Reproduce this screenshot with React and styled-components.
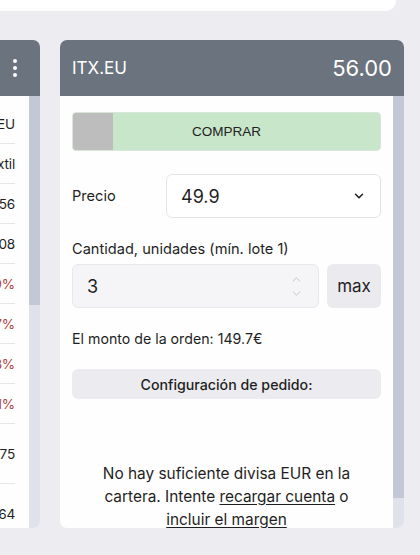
import React from 'react';
import styled, { createGlobalStyle } from 'styled-components';

const GlobalStyle = createGlobalStyle`
  html, body {
    margin: 0;
    padding: 0;
    background: #ececf1;
  }
  body {
    font-family: Inter, "Noto Sans", sans-serif;
    color: #1f1f23;
    overflow: hidden;
  }
`;

const Page = styled.div`
  width: 420px;
  height: 555px;
  display: flex;
  flex-direction: column;
  overflow: hidden;
`;

const TopCard = styled.div`
  height: 11px;
  margin-right: 24px;
  background: #fff;
  border-bottom-right-radius: 10px;
`;

const Columns = styled.div`
  display: flex;
  gap: 20px;
  margin-top: 29px;
  height: 488px;
`;

const Panel = styled.div`
  display: flex;
  flex-direction: column;
  background: #fefefe;
  border-radius: 7px;
  overflow: hidden;
  flex: none;
  width: ${(p) => p.$width}px;
  margin-left: ${(p) => p.$offset || 0}px;
`;

const Header = styled.div`
  height: 56px;
  flex: none;
  display: flex;
  align-items: center;
  justify-content: space-between;
  padding: 0 12px;
  background: #6b737e;
  color: #fff;
`;

const Ticker = styled.span`
  font-size: 17px;
`;

const Price = styled.span`
  font-size: 22px;
`;

const Body = styled.div`
  flex: 1;
  display: flex;
  min-height: 0;
`;

const Scrollbar = styled.div`
  width: 11px;
  flex: none;
  display: flex;
  flex-direction: column;
  background: #dfe2ea;
`;

const Thumb = styled.div`
  height: ${(p) => p.$size}px;
  background: #c3c8d7;
`;

const List = styled.div`
  flex: 1;
  display: flex;
  flex-direction: column;
  padding: 8px 14px 0 0;
  min-width: 0;
`;

const Row = styled.div`
  height: ${(p) => p.$h || 39}px;
  flex: none;
  display: flex;
  align-items: center;
  justify-content: flex-end;
  border-bottom: 1px solid #e6e6ea;
  font-size: 13.6px;
  letter-spacing: -0.2px;
  color: ${(p) => (p.$neg ? '#b3443e' : '#1f1f23')};
  white-space: nowrap;
`;

const Kebab = styled.div`
  margin-left: auto;
  margin-right: 11px;
  display: flex;
  flex-direction: column;
  gap: 3px;

  span {
    width: 4px;
    height: 4px;
    border-radius: 50%;
    background: #fff;
  }
`;

const Content = styled.div`
  flex: 1;
  display: flex;
  flex-direction: column;
  padding: 16px 12px 0;

  & > * {
    flex-shrink: 0;
  }
`;

const BuyButton = styled.button`
  display: flex;
  box-sizing: border-box;
  height: 39px;
  padding: 0;
  border: 1px solid #d9e7da;
  border-radius: 4px;
  overflow: hidden;
  background: #c8e6c9;
  font-family: "Liberation Sans", Arial, sans-serif;
  font-size: 13.5px;
  color: #222;

  .grip {
    width: 40px;
    background: #bdbdbd;
  }

  .label {
    flex: 1;
    display: flex;
    align-items: center;
    justify-content: center;
    padding-right: 40px;
  }
`;

const PriceRow = styled.div`
  display: flex;
  align-items: center;
  margin-top: 23px;
`;

const Label = styled.span`
  font-size: 14.6px;
  color: #1f1f23;
`;

const Select = styled.div`
  margin-left: auto;
  width: 215px;
  height: 44px;
  box-sizing: border-box;
  display: flex;
  align-items: center;
  justify-content: space-between;
  padding: 0 14px 0 14px;
  border: 1px solid #e3e3e8;
  border-radius: 6px;
  font-size: 18px;
  background: #fff;
`;

const QtyLabel = styled(Label)`
  display: block;
  margin-top: 22px;
`;

const QtyRow = styled.div`
  display: flex;
  gap: 8px;
  margin-top: 6px;
  height: 44px;
`;

const QtyInput = styled.div`
  flex: 1;
  display: flex;
  align-items: center;
  justify-content: space-between;
  padding: 0 17px 0 14px;
  border: 1px solid #e8e8ec;
  border-radius: 6px;
  background: #f5f5f7;
  font-size: 18px;
`;

const Spinner = styled.div`
  display: flex;
  flex-direction: column;
  gap: 9px;
`;

const MaxButton = styled.button`
  width: 54px;
  border: none;
  border-radius: 6px;
  background: #ebebef;
  font-family: Inter, sans-serif;
  font-size: 17px;
  color: #1f1f23;
  padding: 0;
`;

const Amount = styled.div`
  margin-top: 22px;
  font-size: 14.2px;
`;

const ConfigButton = styled.button`
  margin-top: 22px;
  height: 30px;
  border: none;
  border-radius: 6px;
  background: #ececf0;
  font-family: Inter, sans-serif;
  font-size: 14.2px;
  font-weight: 500;
  color: #1f1f23;
`;

const Notice = styled.p`
  margin: 63px 0 0;
  padding: 0 18px;
  text-align: center;
  font-size: 15.4px;
  line-height: 23px;

  a {
    color: inherit;
    text-decoration: underline;
    text-underline-offset: 2px;
  }
`;

const rows = [
  { t: 'ITX.EU' },
  { t: 'Industria Textil' },
  { t: '55.56' },
  { t: '1.08' },
  { t: '-1.29%', neg: true },
  { t: '-0.87%', neg: true },
  { t: '-2.18%', neg: true },
  { t: '-0.41%', neg: true },
  { t: '1 275', h: 59 },
  { t: '12 064', h: 59 }
];

const Chevron = () => (
  <svg width="14" height="14" viewBox="0 0 24 24" fill="none" stroke="#222" strokeWidth="2.6" strokeLinecap="round" strokeLinejoin="round">
    <path d="M6 9l6 6 6-6" />
  </svg>
);

const Arrow = ({ up }) => (
  <svg width="9" height="5" viewBox="0 0 10 6" fill="none" stroke="#c4c4ca" strokeWidth="1.2" strokeLinecap="round" strokeLinejoin="round">
    <path d={up ? 'M1 5l4-4 4 4' : 'M1 1l4 4 4-4'} />
  </svg>
);

const App = () => (
  <Page>
    <GlobalStyle />
    <TopCard />
    <Columns>
      <Panel $width={180} $offset={-140}>
        <Header>
          <Kebab>
            <span />
            <span />
            <span />
          </Kebab>
        </Header>
        <Body>
          <List>
            {rows.map((r) => (
              <Row key={r.t} $neg={r.neg} $h={r.h}>
                {r.t}
              </Row>
            ))}
          </List>
          <Scrollbar>
            <Thumb $size={209} />
          </Scrollbar>
        </Body>
      </Panel>

      <Panel $width={344}>
        <Header>
          <Ticker>ITX.EU</Ticker>
          <Price>56.00</Price>
        </Header>
        <Body>
          <Content>
            <BuyButton>
              <span className="grip" />
              <span className="label">COMPRAR</span>
            </BuyButton>

            <PriceRow>
              <Label>Precio</Label>
              <Select>
                49.9
                <Chevron />
              </Select>
            </PriceRow>

            <QtyLabel>Cantidad, unidades (mín. lote 1)</QtyLabel>
            <QtyRow>
              <QtyInput>
                3
                <Spinner>
                  <Arrow up />
                  <Arrow />
                </Spinner>
              </QtyInput>
              <MaxButton>max</MaxButton>
            </QtyRow>

            <Amount>El monto de la orden: 149.7€</Amount>

            <ConfigButton>Configuración de pedido:</ConfigButton>

            <Notice>
              No hay suficiente divisa EUR en la cartera. Intente{' '}
              <a href="#recargar">recargar cuenta</a> o <a href="#margen">incluir el margen</a>
            </Notice>
          </Content>
          <Scrollbar>
            <Thumb $size={402} />
          </Scrollbar>
        </Body>
      </Panel>
    </Columns>
  </Page>
);

export default App;
